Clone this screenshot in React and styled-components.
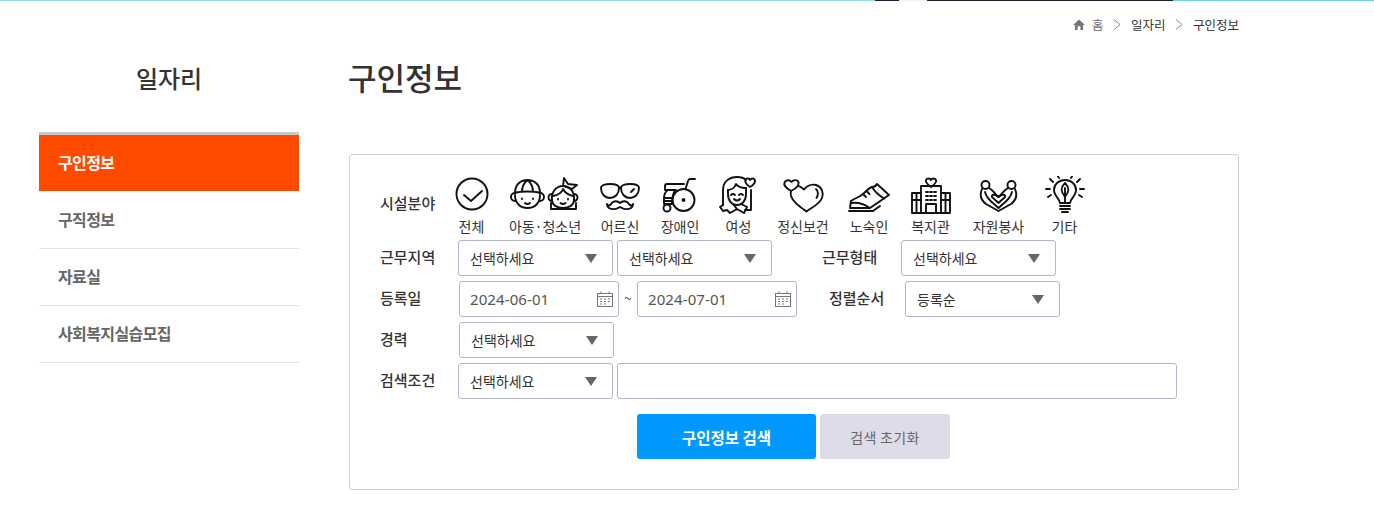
import React from "react";
import styled, { createGlobalStyle } from "styled-components";

const GlobalStyle = createGlobalStyle`
  html, body {
    margin: 0;
    padding: 0;
    background: #fff;
    font-family: "Noto Sans CJK KR", "Noto Sans", sans-serif;
    color: #333;
  }
  * {
    box-sizing: border-box;
  }
`;

const TopStrip = styled.div`
  height: 1px;
  background: linear-gradient(
    to right,
    #8fdcec 0,
    #8fdcec 875px,
    #1c2230 875px,
    #1c2230 899px,
    #f2f2f2 899px,
    #f2f2f2 927px,
    #1c2230 927px,
    #1c2230 1173px,
    #6fd0e3 1173px,
    #6fd0e3 100%
  );
`;

const Page = styled.div`
  width: 1374px;
  height: 518px;
  overflow: hidden;
`;

const Breadcrumb = styled.nav`
  display: flex;
  justify-content: flex-end;
  align-items: center;
  height: 47px;
  padding: 0 135px 0 0;
  font-size: 12.5px;
  color: #333;
`;

const Crumb = styled.span`
  color: ${(p) => (p.$muted ? "#666" : "#333")};
`;

const Chevron = styled.svg`
  width: 8px;
  height: 11px;
  margin: 0 9.5px 0 10px;
  fill: none;
  stroke: #888;
  stroke-width: 1;
`;

const HomeIcon = styled.svg`
  width: 12px;
  height: 11px;
  margin-right: 7px;
  fill: #777;
`;

const Columns = styled.div`
  display: flex;
  padding-left: 39px;
`;

const Sidebar = styled.aside`
  width: 260px;
  margin-right: 49px;
`;

const SideTitle = styled.h2`
  margin: 0 0 24px;
  height: 60px;
  line-height: 60px;
  text-align: center;
  font-size: 24px;
  font-weight: 500;
  color: #333;
`;

const Menu = styled.ul`
  list-style: none;
  margin: 0;
  padding: 0;
  border-top: 3px solid #c8c8c8;
`;

const MenuItem = styled.li`
  display: flex;
  align-items: center;
  height: ${(p) => (p.$active ? "56px" : "57px")};
  margin-bottom: ${(p) => (p.$active ? "1px" : "0")};
  padding: ${(p) => (p.$active ? "0 0 2px 19px" : "0 0 3px 19px")};
  font-size: 16px;
  font-weight: 700;
  letter-spacing: -0.6px;
  color: ${(p) => (p.$active ? "#fff" : "#666")};
  background: ${(p) => (p.$active ? "#ff4b00" : "#fff")};
  border-bottom: ${(p) => (p.$active ? "none" : "1px solid #e4e4e4")};
`;

const Content = styled.main`
  width: 891px;
`;

const PageTitle = styled.h1`
  margin: 0 0 48px;
  height: 58px;
  line-height: 58px;
  font-size: 31px;
  font-weight: 500;
  color: #333;
`;

const SearchCard = styled.section`
  height: 336px;
  margin-left: 1px;
  padding: 21px 30px 30px;
  border: 1px solid #cfcfcf;
  border-radius: 3px;
`;

const FieldRow = styled.div`
  display: flex;
  align-items: center;
  height: 36px;
  margin-bottom: 5px;
`;

const FacilityRow = styled.div`
  display: flex;
  align-items: flex-start;
  height: 59px;
  margin-bottom: 5px;
`;

const Label = styled.label`
  flex: none;
  width: ${(p) => p.$w}px;
  margin-left: ${(p) => p.$ml || 0}px;
  margin-top: -4px;
  font-size: 15px;
  font-weight: 500;
  color: #333;
`;

const FacilityLabel = styled(Label)`
  margin-top: 16px;
`;

const FacilityList = styled.ul`
  display: flex;
  gap: 20px;
  list-style: none;
  margin: 0;
  padding: 0;
`;

const FacilityItem = styled.li`
  display: flex;
  flex-direction: column;
  align-items: center;
  width: ${(p) => p.$w}px;
  white-space: nowrap;
  font-size: 14px;
  line-height: 21px;
  color: #333;
`;

const Drawing = styled.svg`
  display: block;
  flex: none;
  height: 38px;
  margin-bottom: 2px;
  fill: none;
  stroke: #111;
  stroke-width: 1.9;
  stroke-linecap: round;
  stroke-linejoin: round;
`;

const Select = styled.div`
  display: flex;
  align-items: center;
  justify-content: space-between;
  flex: none;
  width: 155px;
  height: 36px;
  margin-right: ${(p) => p.$mr || 0}px;
  padding: 0 15px 0 11px;
  border: 1px solid #b5b5c9;
  border-radius: 3px;
  font-size: 14px;
  color: #333;
  &::after {
    content: "";
    border-left: 6.5px solid transparent;
    border-right: 6.5px solid transparent;
    border-top: 9px solid #666;
  }
`;

const DateBox = styled.div`
  display: flex;
  align-items: center;
  justify-content: space-between;
  flex: none;
  width: 160px;
  height: 36px;
  padding: 0 5px 0 10px;
  border: 1px solid #b5b5c9;
  border-radius: 3px;
  font-family: "Noto Sans", sans-serif;
  font-size: 15px;
  letter-spacing: 0.1px;
  color: #555;
`;

const Calendar = styled.svg`
  width: 16px;
  height: 16px;
  fill: none;
  stroke: #777;
  stroke-width: 1;
`;

const Tilde = styled.span`
  flex: none;
  width: 18px;
  margin-top: -3px;
  text-align: center;
  font-size: 14px;
  color: #555;
`;

const TextInput = styled.input`
  flex: none;
  width: 560px;
  height: 36px;
  margin-left: 4px;
  border: 1px solid #b5b5c9;
  border-radius: 3px;
  outline: none;
`;

const Actions = styled.div`
  display: flex;
  gap: 4px;
  margin: 15px 0 0 257px;
`;

const Button = styled.button`
  height: 45px;
  width: ${(p) => (p.$primary ? "179px" : "130px")};
  border: none;
  border-radius: 3px;
  font-family: inherit;
  font-size: ${(p) => (p.$primary ? "15.500px" : "14px")};
  font-weight: ${(p) => (p.$primary ? 700 : 400)};
  letter-spacing: ${(p) => (p.$primary ? "0" : "0.3px")};
  color: ${(p) => (p.$primary ? "#fff" : "#666")};
  background: ${(p) => (p.$primary ? "#0099ff" : "#dcdde9")};
`;

const CheckIcon = () => (
  <Drawing viewBox="0 0 36 38" width="36">
    <circle cx="18" cy="18" r="15.5" />
    <path d="M10 19l7 6 11-10" />
  </Drawing>
);

const KidsIcon = () => (
  <Drawing viewBox="0 0 70 38" width="70">
    <path d="M5 19C5 27 10 32 17.5 32C25 32 30 27 30 19" />
    <path d="M5 17C5 9 10 4 17.5 4C25 4 30 9 30 17C24 15 11 15 5 17ZM12 15.500C12 11 14 7 17.5 4C21 7 23 11 23 15.500" />
    <path d="M5 17a4 4 0 1 0 0 8M30 17a4 4 0 1 1 0 8" />
    <path d="M15 27q2.500 2 5 0M12 22.500v.5M23 22.500v.5" />
    <path d="M42 24C41 15 47 10 53 10C59 10 65 15 64 24" />
    <path d="M42 24C42 29 47 32 53 32C59 32 64 29 64 24" />
    <path d="M42 18a3.500 3.500 0 1 0 0 7M64 18a3.500 3.500 0 1 1 0 7" />
    <path d="M43 20C48 19 52 16 53 13C55 17 59 19 63 20" />
    <path d="M41 27V33H66V27" />
    <path d="M53 10L54 2L58 8L67 9L62 13L54 10" />
    <path d="M50.500 27q2.500 2 5 0M48 23v.5M58 23v.5" />
  </Drawing>
);

const GlassesIcon = () => (
  <Drawing viewBox="0 0 40 38" width="40">
    <path d="M1 12C1 9 6 8 10 8C14 8 19 9 19 12C19 18 15 22 10 22C5 22 1 18 1 12Z" />
    <path d="M21 12C21 9 26 8 30 8C34 8 39 9 39 12C39 18 35 22 30 22C25 22 21 18 21 12Z" />
    <path d="M19 12Q20 11 21 12M34 13l-3 3" />
    <path d="M20 27C17 24 13 25 11 28C10 30 8 30 7 28C7 33 14 35 20 31C26 35 33 33 33 28C32 30 30 30 29 28C27 25 23 24 20 27Z" />
  </Drawing>
);

const WheelchairIcon = () => (
  <Drawing viewBox="0 0 40 38" width="40">
    <circle cx="23.500" cy="24" r="11" />
    <circle cx="23.500" cy="24" r="1" />
    <circle cx="7" cy="32" r="3.500" />
    <path d="M35 3H30Q28.500 3 28 5L25.500 13" />
    <path d="M5 14V10Q5 8 7 8H24M5 14H16" />
    <path d="M15 14C13 18 12 21 12 28H4V22C4 18 5 16 8 14M4 22H13M5 25H12" />
  </Drawing>
);

const WomanIcon = () => (
  <Drawing viewBox="0 0 40 38" width="40">
    <path d="M4 29V14C4 5 11 1 18 1C22 1 25 2 27 4" />
    <path d="M32 14V34H26" />
    <path d="M9 14V18C9 25 13 29 18 29C23 29 27 25 27 18V12" />
    <path d="M9 14C13 14 16 11 17 8C19 11 23 12 27 12" />
    <path d="M12 19q2-2 4 0M20 19q2-2 4 0M15 23q3 3 6 0" />
    <path d="M4 29L1 31L4 35L8 34L11 37L18 33L25 37L28 31L22 28M14 28L18 33" />
    <path d="M31 11C26 8 25 4 28 2.500C29.500 2 30.500 3 31 4C32 3 33.500 2 35 3C37.500 5 35 9 31 11Z" />
  </Drawing>
);

const HeartsIcon = () => (
  <Drawing viewBox="0 0 44 38" width="44">
    <path d="M17 9.500C19 10.500 21.500 12 23 13.500C26 9.500 31 8 35 9C41 11 43 17 41 22C38 29 31 31 25.500 35.500C18 30 12 26 10 20C9.500 18 9.500 16.500 10 15" />
    <path d="M10 15C5 12 2.500 9 3.500 6.500C5 3.500 8.500 3.500 10.500 6C12.500 3.500 16 3.500 17.500 6C18.500 9.500 14 13 10 15Z" />
    <path d="M35 13C37.500 15 37.500 19 35.500 22" />
  </Drawing>
);

const ShoeIcon = () => (
  <Drawing viewBox="0 0 42 38" width="42">
    <path d="M2 32L3 25C7 22 12 21 15 18C18 15 21 12 24 11C26 11 28 10 29 8L41 19L22 32Z" />
    <path d="M3 27C10 26 16 28 21 31.500" />
    <path d="M24 11C27 16 32 20 36 22.500M15 18l3 3M18.500 15l3 3" />
    <path d="M1 35H25L32 30" />
  </Drawing>
);

const BuildingIcon = () => (
  <Drawing viewBox="0 0 40 38" width="40">
    <path d="M1 37H39M10 37V10H30V37M10 17H1V37M30 17H39V37" />
    <path d="M1 24H10M30 24H39M5.500 17V37M34.500 17V37" />
    <path d="M15 16H25M15 20H25M15 24H25" strokeDasharray="2 2" />
    <path d="M15 37V28H25V37" />
    <path d="M20 11C16 8 14 6 15 4C16 2 19 2 20 4C21 2 24 2 25 4C26 6 24 8 20 11Z" />
  </Drawing>
);

const HandsIcon = () => (
  <Drawing viewBox="0 0 40 38" width="40">
    <circle cx="6.500" cy="9" r="4" />
    <circle cx="32.500" cy="9" r="4" />
    <path d="M10 12C14 14 15 17 19.500 21C24 17 25 14 29 12" />
    <path d="M3 13C0 20 3 25 7 28L19.500 35L32 28C36 25 39 20 36 13" />
    <path d="M6 16C7 20 10 24 15 28M33 16C32 20 29 24 24 28M15 28L19.500 32L24 28" />
    <path d="M19.500 27L13 21C12 19 15 17 19.500 21C24 17 27 19 26 21Z" />
  </Drawing>
);

const BulbIcon = () => (
  <Drawing viewBox="0 0 40 38" width="40">
    <path d="M15 27C15 23 9 20 9 14C9 8 14 4 20 4C26 4 31 8 31 14C31 20 25 23 25 27Z" />
    <path d="M20 7C16 11 15 15 20 21C25 15 24 11 20 7ZM20 12V27" />
    <path d="M15 30H25M15 33H25M17 36H23" />
    <path d="M1 13H5M35 13H39M5 3L8 6M35 3L32 6M3 21L6 19M37 21L34 19M13 0.500L14 2M27 0.500L26 2" />
  </Drawing>
);

const CalendarIcon = () => (
  <Calendar viewBox="0 0 16 16">
    <rect x=".5" y="2.500" width="15" height="13" />
    <path d="M.5 5.500H15.500M4 .5V3M12 .5V3" />
    <path d="M3 8H5M7 8H9M11 8H13M3 10.500H5M7 10.500H9M11 10.500H13M3 13H5M7 13H9" />
  </Calendar>
);

const facilities = [
  { name: "전체", w: 37, Icon: CheckIcon },
  { name: "아동·청소년", w: 70, Icon: KidsIcon },
  { name: "어르신", w: 40, Icon: GlassesIcon },
  { name: "장애인", w: 40, Icon: WheelchairIcon },
  { name: "여성", w: 37, Icon: WomanIcon },
  { name: "정신보건", w: 52, Icon: HeartsIcon },
  { name: "노숙인", w: 40, Icon: ShoeIcon },
  { name: "복지관", w: 43, Icon: BuildingIcon },
  { name: "자원봉사", w: 53, Icon: HandsIcon },
  { name: "기타", w: 39, Icon: BulbIcon },
];

const menu = ["구직정보", "자료실", "사회복지실습모집"];

function App() {
  return (
    <Page>
      <GlobalStyle />
      <TopStrip />
      <Breadcrumb>
        <HomeIcon viewBox="0 0 13 12">
          <path d="M6.500 .5L13 6.500H11V12H8V8H5V12H2V6.500H0Z" />
        </HomeIcon>
        <Crumb $muted>홈</Crumb>
        <Chevron viewBox="0 0 8 11">
          <path d="M1 .5L7 5.500L1 10.500" />
        </Chevron>
        <Crumb>일자리</Crumb>
        <Chevron viewBox="0 0 8 11">
          <path d="M1 .5L7 5.500L1 10.500" />
        </Chevron>
        <Crumb>구인정보</Crumb>
      </Breadcrumb>
      <Columns>
        <Sidebar>
          <SideTitle>일자리</SideTitle>
          <Menu>
            <MenuItem $active>구인정보</MenuItem>
            {menu.map((name) => (
              <MenuItem key={name}>{name}</MenuItem>
            ))}
          </Menu>
        </Sidebar>
        <Content>
          <PageTitle>구인정보</PageTitle>
          <SearchCard>
            <FacilityRow>
              <FacilityLabel $w={73}>시설분야</FacilityLabel>
              <FacilityList>
                {facilities.map(({ name, w, Icon }) => (
                  <FacilityItem key={name} $w={w}>
                    <Icon />
                    {name}
                  </FacilityItem>
                ))}
              </FacilityList>
            </FacilityRow>
            <FieldRow>
              <Label $w={78}>근무지역</Label>
              <Select $mr={4}>선택하세요</Select>
              <Select>선택하세요</Select>
              <Label $w={79} $ml={50}>근무형태</Label>
              <Select>선택하세요</Select>
            </FieldRow>
            <FieldRow>
              <Label $w={79}>등록일</Label>
              <DateBox>
                2024-06-01
                <CalendarIcon />
              </DateBox>
              <Tilde>~</Tilde>
              <DateBox>
                2024-07-01
                <CalendarIcon />
              </DateBox>
              <Label $w={76} $ml={32}>정렬순서</Label>
              <Select>등록순</Select>
            </FieldRow>
            <FieldRow>
              <Label $w={79}>경력</Label>
              <Select>선택하세요</Select>
            </FieldRow>
            <FieldRow>
              <Label $w={78}>검색조건</Label>
              <Select>선택하세요</Select>
              <TextInput />
            </FieldRow>
            <Actions>
              <Button $primary>구인정보 검색</Button>
              <Button>검색 초기화</Button>
            </Actions>
          </SearchCard>
        </Content>
      </Columns>
    </Page>
  );
}

export default App;
